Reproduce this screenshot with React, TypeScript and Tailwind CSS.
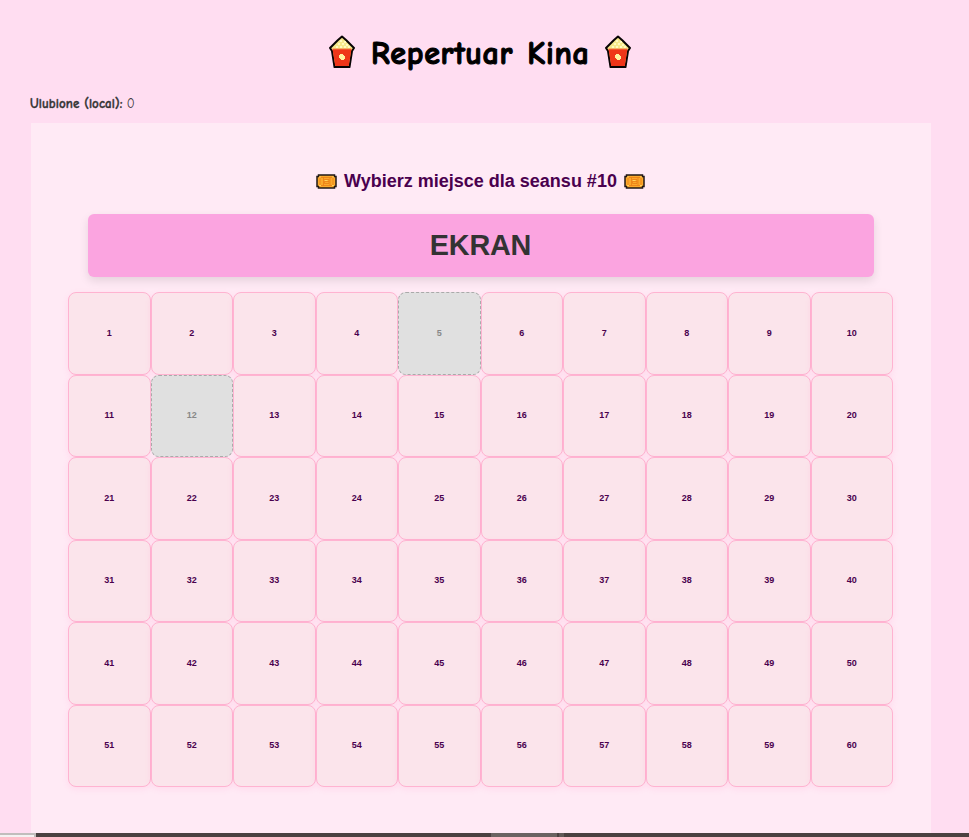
const takenSeats = [5, 12];
const seats = Array.from({ length: 60 }, (_, i) => i + 1);

function Popcorn() {
  return (
    <svg className="h-[34px] w-[28px] shrink-0" viewBox="0 0 28 34">
      <path d="M14 1.6L18 5L22 9L26 13L24 16L21.5 32H6.5L4 16L2 13L6 9L10 5z" fill="#f6e98b" stroke="#080404" strokeWidth="2" strokeLinejoin="round" />
      <path d="M12 5h2v2h-2zM16 6h2v2h-2zM10 8h2v2h-2zM14 8h2v2h-2zM18 9h2v2h-2zM8 11h2v2H8zM12 11h2v2h-2zM16 11h2v2h-2zM20 11h2v2h-2z" fill="#fffabf" />
      <path d="M4.5 14h19L20.8 31H7.2z" fill="#ef3519" />
      <path d="M4.5 13.5h19v1h-19z" fill="#f77b45" />
      <path d="M12 19h3v1h1v1h1v3h-1v1h-3v-1h-1v-1h-1v-3h1z" fill="#fff0a0" />
    </svg>
  );
}

function Ticket() {
  return (
    <svg className="h-[15px] w-[21px] shrink-0" viewBox="0 0 21 15">
      <path d="M2.5 1h16v1.5H20v10h-1.5V14h-16v-1.5H1v-10h1.5z" fill="#fba92c" stroke="#201817" strokeWidth="1.5" />
      <path d="M4 3.5h13v8H4zM7.5 3.5v8M14 3.5v8M8.5 5.5H13v4H8.5zM9 7.5h4" fill="none" stroke="#e87912" strokeWidth="0.7" />
      <path d="M3 3h2M16 3h2M8.5 6.5h3M3 11.5h2M16 11.5h2" stroke="#ffd35c" strokeWidth="1" />
    </svg>
  );
}

export default function App() {
  return (
    <div className="flex h-[837px] w-[969px] flex-col overflow-hidden bg-[#ffddf1] font-['Liberation_Sans',Arial,sans-serif]">
      <main className="flex min-h-0 flex-1 flex-col overflow-hidden pl-[31px]">
        <h1 className="mt-[35px] flex h-[34px] w-[898px] shrink-0 items-center justify-center gap-[15px] font-['Comic_Sans_MS','Comic_Neue',Lato,sans-serif] text-[32px] leading-[34px] font-bold text-black">
          <Popcorn />
          <span className="mt-[3px] w-[218px] text-center tracking-[0.7px] whitespace-nowrap [-webkit-text-stroke:1.1px_#000] [word-spacing:2px]">Repertuar Kina</span>
          <Popcorn />
        </h1>
        <p className="mt-[26px] -ml-px h-[18px] shrink-0 font-['Comic_Sans_MS','Comic_Neue',Lato,sans-serif] text-[13px] leading-[18px] text-[#333]">
          <strong className="font-bold tracking-[0.1px] [-webkit-text-stroke:0.35px_#333]">Ulubione (local):</strong> 0
        </p>
        <section className="mt-[10px] flex w-[900px] flex-1 shrink-0 flex-col items-center bg-[#ffeaf5]">
          <h2 className="mt-[48px] mr-px flex h-[20px] shrink-0 items-center justify-center gap-[7px] text-[18px] leading-[20px] font-bold whitespace-nowrap text-[#4a004e]">
            <Ticket />
            <span>Wybierz miejsce dla seansu #10</span>
            <Ticket />
          </h2>
          <div className="mt-[23px] flex h-[63px] w-[786px] shrink-0 items-center justify-center rounded-[6px] bg-[#fba4e0] pr-px text-[28.8px] font-bold tracking-[-0.2px] text-[#333] shadow-[0_4px_10px_rgba(0,0,0,0.1)]">
            EKRAN
          </div>
          <div className="mt-[15px] mr-px grid w-[825px] shrink-0 auto-rows-[82.5px] grid-cols-10">
            {seats.map((seat) => (
              <button
                key={seat}
                disabled={takenSeats.includes(seat)}
                className={
                  takenSeats.includes(seat)
                    ? "relative rounded-[8px] border border-dashed border-[#aaa] bg-[#e0e0e0] text-[9px] font-bold text-[#888]"
                    : "rounded-[8px] border border-[#ffb3d1] bg-[#fbe4eb] text-[9px] font-bold text-[#4a004e] shadow-[0_2px_6px_rgba(255,105,180,0.12)]"
                }
              >
                {seat}
              </button>
            ))}
          </div>
        </section>
      </main>
      <footer className="flex h-[4px] shrink-0 bg-[#4b4140]">
        <div className="h-[4px] w-[36px] border-t-2 border-r-2 border-[#c1bdbc] bg-[#f4f2f2]" />
        <div className="ml-[455px] w-[66px] bg-[#6b6361]" />
        <div className="ml-[2px] w-[5px] bg-[#625957]" />
      </footer>
    </div>
  );
}
